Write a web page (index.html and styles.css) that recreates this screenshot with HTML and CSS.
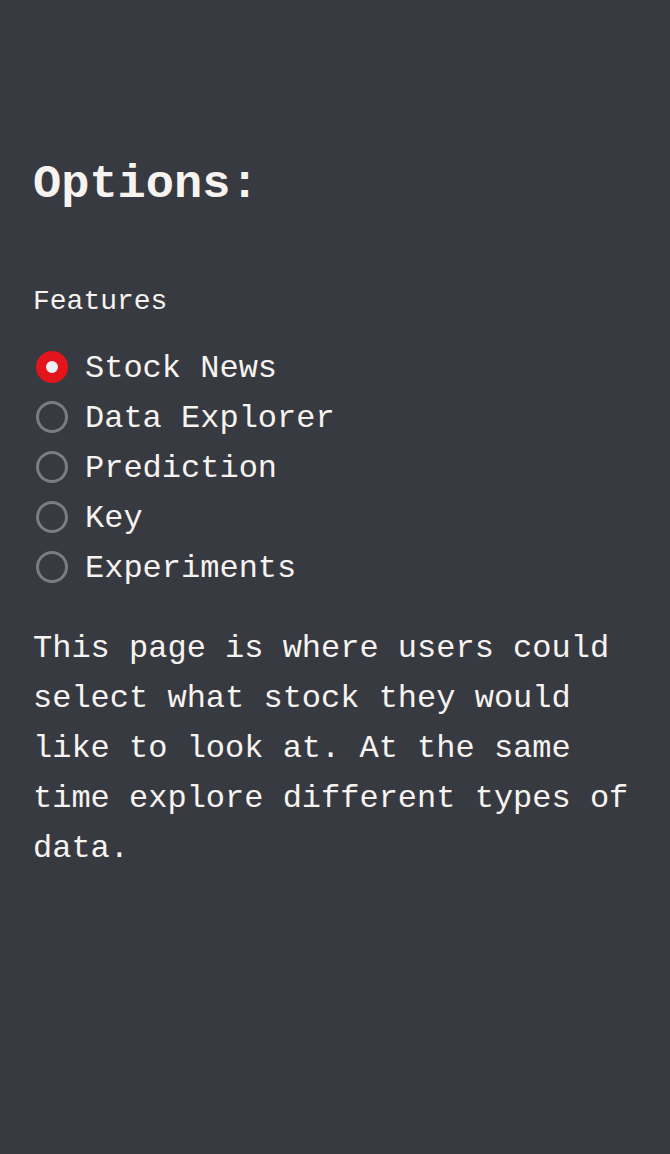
FILE: index.html
```html
<!DOCTYPE html>
<html lang="en">
<head>
<meta charset="utf-8">
<title>Options</title>
<link rel="stylesheet" href="styles.css">
</head>
<body>
<aside class="sidebar">
  <h1 class="title">Options:</h1>
  <div class="field">
    <div class="field-label">Features</div>
    <div class="radio-group">
      <label class="radio checked"><span class="dot"></span><span class="radio-text">Stock News</span></label>
      <label class="radio"><span class="dot"></span><span class="radio-text">Data Explorer</span></label>
      <label class="radio"><span class="dot"></span><span class="radio-text">Prediction</span></label>
      <label class="radio"><span class="dot"></span><span class="radio-text">Key</span></label>
      <label class="radio"><span class="dot"></span><span class="radio-text">Experiments</span></label>
    </div>
  </div>
  <p class="desc">This page is where users could select what stock they would like to look at. At the same time explore different types of data.</p>
</aside>
</body>
</html>
```

FILE: styles.css
```css
html, body {
  margin: 0;
  padding: 0;
  background: #383a41;
}
body {
  min-height: 1154px;
  font-family: "Liberation Mono", "DejaVu Sans Mono", monospace;
  color: #f6f3f0;
}
.sidebar {
  display: flex;
  flex-direction: column;
  padding: 157px 20px 0 33px;
}
.title {
  margin: 0;
  font-size: 47px;
  line-height: 56px;
  font-weight: 700;
}
.field {
  margin-top: 68px;
  display: flex;
  flex-direction: column;
  gap: 21px;
}
.field-label {
  font-size: 28px;
  line-height: 42px;
}
.radio-group {
  display: flex;
  flex-direction: column;
}
.radio {
  display: flex;
  align-items: center;
  height: 50px;
  gap: 17px;
}
.dot {
  box-sizing: border-box;
  width: 32px;
  height: 32px;
  margin: -4px 0 0 3px;
  border-radius: 50%;
  border: 3px solid #7c7c81;
  flex: none;
}
.radio.checked .dot {
  border: 10px solid #e3141b;
  background: #eef0f6;
}
.radio-text {
  font-size: 32px;
  line-height: 50px;
}
.desc {
  margin: 30px 0 0;
  font-size: 32px;
  line-height: 50px;
}
```
